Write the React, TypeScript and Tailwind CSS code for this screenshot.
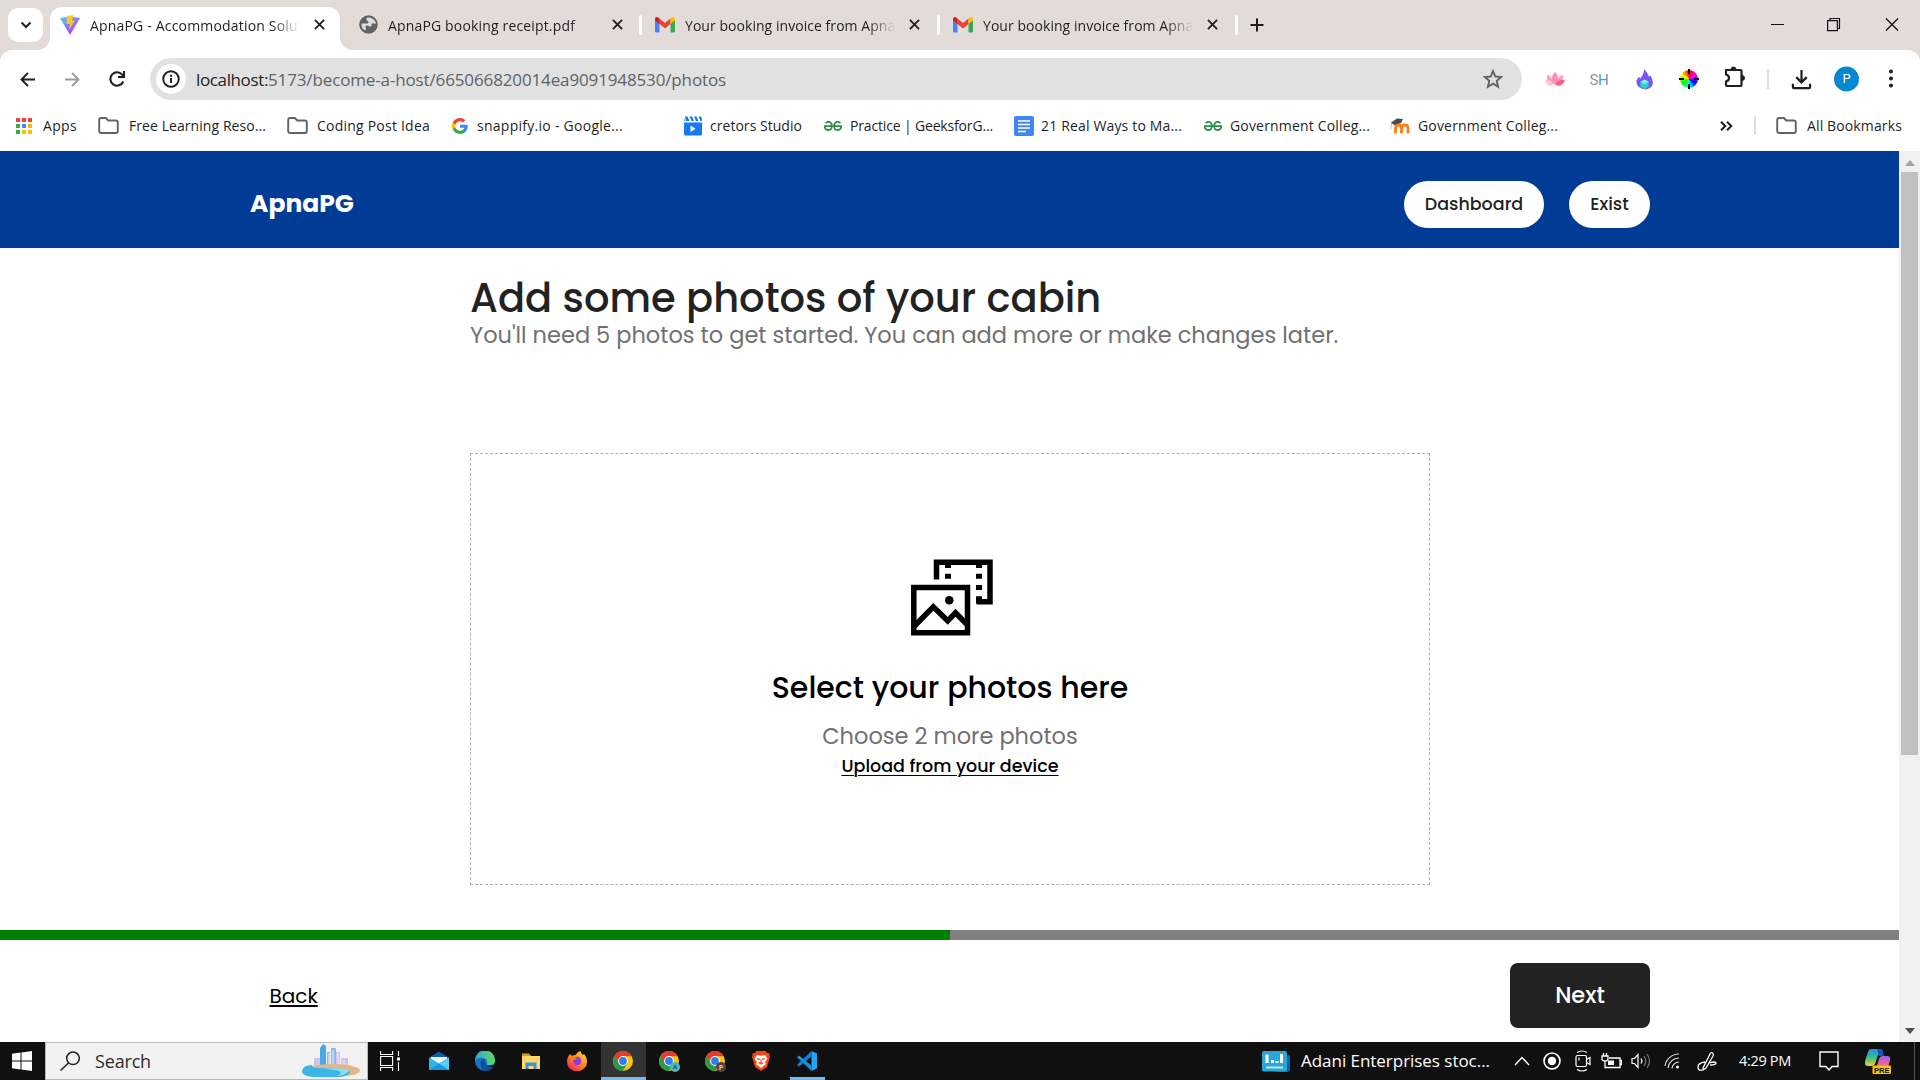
import { useLayoutEffect, useRef, useState } from "react";
import type { ReactNode } from "react";

const ui = "font-['Open_Sans','Noto_Sans',sans-serif]";
const brand = "font-['Poppins','Inter',sans-serif]";

/* One line of text whose tracking is adjusted until it fills the given width. */
function Fit({ w, className = "", children }: { w: number; className?: string; children: string }) {
  const ref = useRef<HTMLSpanElement>(null);
  const [ls, setLs] = useState(0);
  useLayoutEffect(() => {
    if (ref.current) setLs((w - ref.current.getBoundingClientRect().width) / children.length);
  }, [w, children]);
  return (
    <span ref={ref} className={"inline-block shrink-0 whitespace-pre " + className} style={{ letterSpacing: ls }}>
      {children}
    </span>
  );
}

function Gmail() {
  return (
    <svg viewBox="0 0 20 16" className="h-4 w-5 shrink-0">
      <path d="M0 3v11q0 1.500 1.500 1.500H4.500V6z" fill="#4285f4" />
      <path d="M20 3v11q0 1.500-1.500 1.500H15.500V6z" fill="#34a853" />
      <path d="M4.500 7V1.500L10 6l5.500-4.500V7L10 11.500z" fill="#ea4335" />
      <path d="M0 3.500V2.300C0 .2 2-.5 3.500.7l1 .8V7z" fill="#c5221f" />
      <path d="M20 3.500V2.300C20 .2 18-.5 16.500.7l-1 .8V7z" fill="#fbbc04" />
    </svg>
  );
}

function Vite() {
  return (
    <svg viewBox="0 0 20 20" className="size-5 shrink-0">
      <defs>
        <linearGradient id="va" x1="0" y1="0" x2=".6" y2="1">
          <stop offset="0" stopColor="#41d1ff" />
          <stop offset="1" stopColor="#bd34fe" />
        </linearGradient>
      </defs>
      <path d="M0 3l10.500-1.500L20 3 10 20z" fill="url(#va)" />
      <path d="M7 1l6.500-1-1.500 5.500h3L9 15l1-6H6.500z" fill="#ffc61c" />
    </svg>
  );
}

function Globe() {
  return (
    <svg viewBox="0 0 20 20" className="size-[19px] shrink-0">
      <circle cx="10" cy="10" r="9.800" fill="#5f6368" />
      <path d="M9 2.500c-2 2-1 3 .5 4s0 2.500-1.500 2.500H3c-1 3 1 6 3 7 2-.5 1.500-3 .5-4 1-1.500 3-1 4.500 0 2 .5 3-1 2-2.500 1-1.500 3-1 4.800 0C17.500 5 14 2.500 9 2.500z" fill="#e3dbd8" />
      <path d="M10 17.500c3.500-.3 6-2 7-5.500-2.500-.5-3 2-5 2.500-1.500.5-2 2-2 3z" fill="#5f6368" />
    </svg>
  );
}

function Cross({ className = "" }: { className?: string }) {
  return (
    <svg viewBox="0 0 12 12" className={"size-[11px] shrink-0 " + className}>
      <path d="M1 1l10 10M11 1L1 11" stroke="#1f1f1f" strokeWidth="2" />
    </svg>
  );
}

function Tab({ icon, children, w, className = "" }: { icon: ReactNode; children: string; w: number; className?: string }) {
  return (
    <div className={"flex h-[43px] shrink-0 items-center " + className}>
      {icon}
      <div className="ml-[10px] w-[212px] overflow-hidden pt-[2px] text-[14px] leading-5 text-[#1f1f1f] [mask-image:linear-gradient(to_right,#000_86%,transparent_99%)]">
        <Fit w={w}>{children}</Fit>
      </div>
      <Cross className="ml-[12px]" />
    </div>
  );
}

function TabStrip() {
  return (
    <div className="flex h-[50px] bg-[#e3dbd8]">
      <div className="mt-2 ml-2 flex h-[34px] w-[35px] items-center justify-center rounded-[10px] bg-white">
        <svg viewBox="0 0 12 8" className="h-2 w-3">
          <path d="M1.500 1.500L6 6l4.500-4.500" fill="none" stroke="#1f1f1f" strokeWidth="2" />
        </svg>
      </div>
      <div className="relative mt-[7px] ml-[7px] w-[290px] rounded-t-[12px] bg-white pl-[10px]">
        <span className="absolute bottom-0 -left-3 size-3 bg-[radial-gradient(circle_at_0_0,transparent_11.5px,#fff_12px)]" />
        <span className="absolute -right-3 bottom-0 size-3 bg-[radial-gradient(circle_at_100%_0,transparent_11.5px,#fff_12px)]" />
        <Tab icon={<Vite />} w={234} className="-mt-[4px]">ApnaPG - Accommodation Solution</Tab>
      </div>
      <Tab icon={<Globe />} w={187} className="mt-[3px] ml-[19px]">ApnaPG booking receipt.pdf</Tab>
      <span className="mt-[15px] ml-[16px] h-5 w-[3px] rounded bg-white" />
      <Tab icon={<Gmail />} w={229} className="mt-[3px] ml-[13px]">Your booking invoice from ApnaPG</Tab>
      <span className="mt-[15px] ml-[17px] h-5 w-[3px] rounded bg-white" />
      <Tab icon={<Gmail />} w={229} className="mt-[3px] ml-[13px]">Your booking invoice from ApnaPG</Tab>
      <span className="mt-[15px] ml-[17px] h-5 w-[3px] rounded bg-white" />
      <svg viewBox="0 0 14 14" className="mt-[18px] ml-[12px] size-[14px]">
        <path d="M7 .5v13M.5 7h13" stroke="#1f1f1f" strokeWidth="2" />
      </svg>
      <svg viewBox="0 0 130 16" className="mt-4 mr-[20px] ml-auto h-4 w-[130px]" fill="none" stroke="#111" strokeWidth="1.200">
        <path d="M1 8.500h13M57.600 4.600h9.800v10h-9.800zM60 4.500v-2h9.500v10H67.500" />
        <path d="M116 2.500l12 12M128 2.500l-12 12" strokeWidth="1.300" />
      </svg>
    </div>
  );
}

function Toolbar() {
  return (
    <div className="bg-[#e3dbd8]">
      <div className="flex h-[58px] items-center rounded-t-[12px] bg-white">
        <svg viewBox="0 0 16 16" className="ml-[20px] size-[15px]" fill="none" stroke="#1f1f1f" strokeWidth="2.100">
          <path d="M8.500 1L1.700 8l6.800 7M2 8h14" />
        </svg>
        <svg viewBox="0 0 16 16" className="ml-[30px] size-[15px]" fill="none" stroke="#9a9a9a" strokeWidth="2.100">
          <path d="M7.500 1l6.800 7-6.800 7M14 8H0" />
        </svg>
        <svg viewBox="0 0 16 16" className="ml-[29px] size-4" fill="none" stroke="#1f1f1f" strokeWidth="2.100">
          <path d="M14.300 10.500A6.700 6.700 0 1 1 13.500 4L14.500 5.500M15 0v6H9" />
        </svg>
        <div className="ml-[25px] flex h-[42px] w-[1372px] items-center rounded-full bg-[#e1e1e1] pl-[6px]">
          <span className="flex size-[30px] items-center justify-center rounded-full bg-white">
            <svg viewBox="0 0 18 18" className="size-[18px]" fill="none" stroke="#1f1f1f" strokeWidth="1.900">
              <circle cx="9" cy="9" r="7.800" />
              <path d="M9 8v5M9 4.700v2" />
            </svg>
          </span>
          <span className="ml-[10px] flex pt-[1px] text-[17px] leading-6">
            <Fit w={72} className="text-[#1f1f1f]">localhost:</Fit>
            <Fit w={458} className="text-[#5f6368]">5173/become-a-host/665066820014ea9091948530/photos</Fit>
          </span>
          <svg viewBox="0 0 20 20" className="mr-[19px] ml-auto size-5" fill="none" stroke="#5f6368" strokeWidth="1.900">
            <path d="M10 2l2.300 5.500 5.900.5-4.500 3.900 1.400 5.800L10 14.600l-5.100 3.100 1.400-5.800L1.800 8l5.900-.5z" />
          </svg>
        </div>
        <svg viewBox="0 0 20 16" className="ml-[23px] h-4 w-5">
          <path d="M2 4q4 0 6 7L6 14Q1 10 2 4zM18 4q-4 0-6 7l2 3q5-4 4-10z" fill="#ff9db8" />
          <path d="M10 1q5 5 2 12H8Q5 6 10 1z" fill="#ff8faf" />
          <path d="M0 9q6-1 9 5-6 3-9-5z" fill="#ffc2d2" />
          <path d="M20 9q-7-1-10 5 7 3 10-5z" fill="#ff5c8a" />
        </svg>
        <span className="ml-[24px] flex w-[20px] justify-center pt-[2px] font-['Roboto',sans-serif] text-[15px] tracking-[-0.4px]">
          <span className="text-[#8b98a5]">S</span>
          <span className="text-[#5a94cc]">H</span>
        </span>
        <svg viewBox="0 0 18 22" className="ml-[27px] h-[21px] w-[17px]">
          <path d="M8.500 0Q13 5 13.500 8l2-1q4.500 8 .5 12-6 5-13 0-5-5 0-11l1.500 2Q8.500 6 8.500 0z" fill="#7f52f2" />
          <path d="M9 11l4.500 2.500v5L9 21l-4.500-2.500v-5z" fill="#25d0d8" />
          <path d="M9 11l4.500 2.500L9 16l-4.500-2.500z" fill="#7df0d5" />
        </svg>
        <span className="relative ml-[27px] size-[18px] rounded-full bg-[conic-gradient(#f00,#f0f,#00f,#0ff,#0f0,#ff0,#f00)]">
          <span className="absolute -top-[1px] left-[8px] h-[5px] w-[1.500px] bg-black" />
          <span className="absolute -bottom-[1px] left-[8px] h-[5px] w-[1.500px] bg-black" />
          <span className="absolute top-[8px] -left-[1px] h-[1.500px] w-[5px] bg-black" />
          <span className="absolute top-[8px] -right-[1px] h-[1.500px] w-[5px] bg-black" />
        </span>
        <svg viewBox="0 0 22 22" className="ml-[26px] size-[22px] -translate-y-[2px]" fill="none" stroke="#1f1f1f" strokeWidth="2.200">
          <path d="M2 4h14.500q1 0 1 1v14q0 1-1 1H3q-1 0-1-1v-3.500c4-1 4-6 0-7z" strokeLinejoin="round" />
          <path d="M7 3.500a2.500 2.500 0 0 1 5 0zM18 9.500a2.500 2.500 0 0 1 0 5z" fill="#1f1f1f" stroke="#1f1f1f" strokeWidth="1" />
        </svg>
        <span className="ml-[21px] h-5 w-[2px] bg-[#e3dbd8]" />
        <svg viewBox="0 0 22 22" className="ml-[22px] size-[21px]" fill="none" stroke="#1f1f1f" strokeWidth="2.300">
          <path d="M11 1v13M5.500 8.500L11 14l5.500-5.500M2 15.500v3.500q0 1 1 1h16q1 0 1-1v-3.500" />
        </svg>
        <span className="ml-[22px] flex size-[25px] -translate-y-[0.500px] items-center justify-center rounded-full bg-[#0288d1] font-['Roboto',sans-serif] text-[13px] text-white">P</span>
        <svg viewBox="0 0 4 20" className="ml-[30px] h-5 w-1" fill="#1f1f1f">
          <circle cx="2" cy="2.500" r="2" />
          <circle cx="2" cy="9.500" r="2" />
          <circle cx="2" cy="16.500" r="2" />
        </svg>
      </div>
    </div>
  );
}

function FolderOutline() {
  return (
    <svg viewBox="0 0 21 17" className="h-[17px] w-[21px] shrink-0" fill="none" stroke="#5f6368" strokeWidth="1.900">
      <path d="M1.200 14V3q0-2 2-2H8l2.200 2.500h7.600q2 0 2 2V14q0 2-2 2H3.200q-2 0-2-2z" />
    </svg>
  );
}

function Gfg() {
  return (
    <svg viewBox="0 0 18 10" className="h-[10px] w-[18px] shrink-0" fill="none" stroke="#2f8d46" strokeWidth="1.800">
      <path d="M1.500 1.900Q6-.8 7.600 3.200 8.500 9 4.500 9 1 9 .8 5.200h16.400Q17 9 13.500 9 9.500 9 10.400 3.200 12-.8 16.500 1.900" />
    </svg>
  );
}

const rainbow = ["bg-[#ea4335]", "bg-[#ea4335]", "bg-[#ea4335]", "bg-[#34a853]", "bg-[#4285f4]", "bg-[#fbbc04]", "bg-[#34a853]", "bg-[#fbbc04]", "bg-[#fbbc04]"];

function Bookmarks() {
  return (
    <div className="flex h-[43px] items-center bg-white pb-[8px] text-[14px] text-[#1f1f1f]">
      <div className="ml-4 grid grid-cols-3 gap-x-[2px] gap-y-[2px]">
        {rainbow.map((c, i) => (
          <span key={i} className={"size-[4px] " + c} />
        ))}
      </div>
      <Fit w={34} className="ml-[11px]">Apps</Fit>
      <span className="ml-[21px] flex"><FolderOutline /></span>
      <Fit w={137} className="ml-[10px]">Free Learning Reso...</Fit>
      <span className="ml-[21px] flex"><FolderOutline /></span>
      <Fit w={113} className="ml-[9px]">Coding Post Idea</Fit>
      <svg viewBox="0 0 24 24" className="ml-[22px] size-4 shrink-0">
        <path fill="#4285f4" d="M23.500 12.300c0-.8-.1-1.600-.2-2.300H12v4.500h6.500c-.3 1.500-1.100 2.700-2.400 3.600v3h3.900c2.200-2.100 3.500-5.100 3.500-8.800z" />
        <path fill="#34a853" d="M12 24c3.200 0 6-1.100 8-2.900l-3.900-3c-1.100.7-2.500 1.200-4.100 1.200-3.100 0-5.800-2.100-6.700-5H1.200v3.100C3.200 21.300 7.300 24 12 24z" />
        <path fill="#fbbc04" d="M5.300 14.300a7 7 0 0 1 0-4.600V6.600H1.200a12 12 0 0 0 0 10.800z" />
        <path fill="#ea4335" d="M12 4.800c1.800 0 3.300.6 4.600 1.800L20 3.200C18 1.200 15.200 0 12 0 7.300 0 3.200 2.700 1.200 6.600l4.100 3.100c.9-2.900 3.600-4.900 6.700-4.900z" />
      </svg>
      <Fit w={146} className="ml-[9px]">snappify.io - Google...</Fit>
      <svg viewBox="0 0 18 20" className="ml-[61px] h-5 w-[18px] shrink-0">
        <path d="M0 6.500h18V18q0 1.500-1.500 1.500h-15Q0 19.500 0 18z" fill="#1877f2" />
        <path d="M1 .5h2.500l2 4.500H2zM5.500.5H8L10 5H7.500zM10 .5h2.500l2 4.500H12zM14.500.5H17q1 1 1 4.500h-1.500zM0 2l1 3H0z" fill="#1877f2" />
        <path d="M6.500 9.500v6.500l5-3.200z" fill="#fff" />
      </svg>
      <Fit w={92} className="ml-[8px]">cretors Studio</Fit>
      <span className="ml-[22px] flex"><Gfg /></span>
      <Fit w={143} className="ml-[8px]">Practice | GeeksforG...</Fit>
      <svg viewBox="0 0 20 20" className="ml-[21px] size-5 shrink-0">
        <rect width="20" height="20" rx="2" fill="#4285f4" />
        <path d="M4 5h12M4 8.500h12M4 12h12M4 15.500h8" stroke="#fff" strokeWidth="1.600" />
      </svg>
      <Fit w={141} className="ml-[7px]">21 Real Ways to Ma...</Fit>
      <span className="ml-[22px] flex"><Gfg /></span>
      <Fit w={140} className="ml-[8px]">Government Colleg...</Fit>
      <svg viewBox="0 0 20 16" className="ml-[20px] h-4 w-5 shrink-0">
        <path d="M5.500 15.500V10q0-3 3-3t3 3v5.500M11.500 10q0-3 3.200-3T18 10v5.500" fill="none" stroke="#f98012" strokeWidth="2.800" />
        <path d="M1 4.500L7 .5l6 .5-2 4-7 2z" fill="#4a4a4a" />
        <path d="M1.500 5L1 11" stroke="#c9b8a8" />
      </svg>
      <Fit w={140} className="ml-[8px]">Government Colleg...</Fit>
      <svg viewBox="0 0 13 10" className="mr-[21px] ml-auto h-[10px] w-[13px]" fill="none" stroke="#1f1f1f" strokeWidth="2">
        <path d="M1 .7L5.300 5 1 9.300M7 .7L11.300 5 7 9.300" />
      </svg>
      <span className="h-[19px] w-[2px] bg-[#e3dbd8]" />
      <span className="ml-[20px] flex"><FolderOutline /></span>
      <Fit w={95} className="mr-[18px] ml-[10px]">All Bookmarks</Fit>
    </div>
  );
}

function PhotosIcon() {
  return (
    <svg viewBox="0 0 82 77" className="ml-[3px] h-[77px] w-[82px]" fill="none" stroke="#000">
      <path d="M25.500 20.500V3.200h53.500v39.500H65.500" strokeWidth="5.500" />
      <path d="M2.800 28.600h53.700v45.200H2.800z" strokeWidth="5.500" />
      <path d="M3 67.500L22.300 47.800 36.700 61.800 44.500 53.800 57 66.500" strokeWidth="5.500" />
      <circle cx="38.300" cy="41.300" r="4.300" fill="#000" stroke="none" />
      <path d="M34 4h6v5h-6zM34 14.800h6v5h-6zM65 4h6v5h-6zM65 14.800h6v5h-6zM65 26h6v5h-6zM65 37.300h6v7h-6z" fill="#000" stroke="none" />
    </svg>
  );
}

function Page() {
  return (
    <div className={"flex w-[1899px] flex-col bg-white whitespace-nowrap " + brand}>
      <header className="flex h-[97px] items-start justify-between bg-[#003b95] pt-[30px] pr-[249px] pl-[250px]">
        <span className="text-[25px] leading-[46px] font-bold text-white">ApnaPG</span>
        <nav className="flex gap-[25px] text-[17.5px] leading-[46px] font-medium text-[#222]">
          <span className="h-[47px] w-[140px] rounded-full bg-white text-center">Dashboard</span>
          <span className="h-[47px] w-[81px] rounded-full bg-white text-center">Exist</span>
        </nav>
      </header>
      <main className="flex h-[682px] flex-col px-[470px]">
        <h1 className="mt-[24px] h-12 text-[40px] leading-[52px] font-medium text-[#222]">Add some photos of your cabin</h1>
        <p className="h-[30px] text-[22.500px] leading-[30px] text-[#717171]">You'll need 5 photos to get started. You can add more or make changes later.</p>
        <div className="mt-[103px] flex h-[432px] w-[960px] flex-col items-center border border-dashed border-[#b0b0b0] pt-[105px]">
          <PhotosIcon />
          <p className="mt-[30px] text-[30px] leading-[44px] font-medium text-black">Select your photos here</p>
          <p className="mt-[8px] text-[22.500px] leading-[36px] text-[#717171]">Choose 2 more photos</p>
          <p className="mt-[-2px] text-[17.5px] leading-[28px] font-medium text-black underline decoration-1 underline-offset-[3px]">Upload from your device</p>
        </div>
      </main>
      <div className="flex h-[10px] bg-[#808080]">
        <div className="w-1/2 bg-[#008000]" />
      </div>
      <footer className="flex h-[102px] items-start justify-between pr-[249px] pl-[269.5px]">
        <span className="mt-[42px] text-[20px] leading-[28px] text-black underline decoration-2 underline-offset-[1.500px]">Back</span>
        <div className="mt-[23px] h-[65px] w-[140px] rounded-[8px] bg-[#222] text-center text-[22.500px] leading-[65px] font-medium text-white">Next</div>
      </footer>
    </div>
  );
}

function Chrome() {
  return (
    <svg viewBox="0 0 20 20" className="size-5 shrink-0">
      <circle cx="10" cy="10" r="10" fill="#fbc116" />
      <path d="M10 10l-3.900 2.500L1.340 5A10 10 0 0 0 10 20l4.300-7.500z" fill="#2a9c46" />
      <path d="M1.340 5L5.900 12.500 10 5.200h8.700A10 10 0 0 0 1.340 5z" fill="#e33b2e" />
      <circle cx="10" cy="10" r="4.900" fill="#fff" />
      <circle cx="10" cy="10" r="3.900" fill="#2d7ff0" />
    </svg>
  );
}

function Taskbar() {
  return (
    <div className="flex h-[38px] items-center bg-[#101010] text-white">
      <svg viewBox="0 0 20 20" className="ml-3 size-5 shrink-0" fill="#fff">
        <path d="M0 2.700L8.500 1.500v8H0zM9.500 1.400L20 0v9.500H9.500zM0 10.500h8.500v8L0 17.300zM9.500 10.500H20V20L9.500 18.600z" />
      </svg>
      <div className="ml-[13px] flex h-[38px] w-[323px] shrink-0 items-center border border-[#b9b9b9] bg-[#f2f2f2]">
        <svg viewBox="0 0 20 20" className="ml-[14px] size-5" fill="none" stroke="#222" strokeWidth="1.500">
          <circle cx="13" cy="7.300" r="6.300" />
          <path d="M8.500 12L.5 19.500" />
        </svg>
        <Fit w={56} className="ml-[15px] text-[18px] text-[#2b2b2b]">Search</Fit>
        <svg viewBox="0 0 58 34" className="mr-[7px] ml-auto h-[34px] w-[58px]">
          <path d="M12 14h6v10h-6zM39 14h7v10h-7zM33 8h5v16h-5z" fill="#cfc5e6" />
          <path d="M25 8h3v16h-3zM29 4h5v20h-5z" fill="#94b8e6" />
          <path d="M18 4l3-4 3 2v22h-6z" fill="#48a8e8" />
          <path d="M31 6v18M36 9v15M42 16v8M27 9v15" stroke="#e8f0fa" />
          <ellipse cx="31" cy="26.500" rx="27" ry="6.500" fill="#e4b58a" />
          <path d="M0 27q1-6 10-6 0 3 8 3 20 0 30 2 2 5-10 7H16Q0 33 0 27z" fill="#39b5e6" />
          <path d="M20 25q18-2 28 1-4 5-14 6.500 8-4 3-5.500-5-1.500-17-2z" fill="#8be0f0" />
        </svg>
      </div>
      <svg viewBox="0 0 20 20" className="ml-3 size-5 shrink-0" fill="none" stroke="#fff" strokeWidth="1.100">
        <path d="M.6 0v3.500h12V0M.6 5.500h12v9H.6zM.6 20v-3.500h12V20M18.500 0v5M18.500 11v9" />
        <path d="M17 6.500h3v3h-3z" fill="#fff" stroke="none" />
      </svg>
      <svg viewBox="0 0 20 20" className="ml-[29px] size-5 shrink-0">
        <path d="M0 6.500L10 .5l10 6v4H0z" fill="#0b5cad" />
        <path d="M2 6h16v7H2z" fill="#eef3f8" />
        <path d="M0 6.500l10 6 10-6V19H0z" fill="#2db3ea" />
        <path d="M0 19l10-6.500L20 6.500V19z" fill="#55ccf5" />
        <path d="M0 19L10 12.500 20 19z" fill="#1d96d8" />
      </svg>
      <svg viewBox="0 0 20 20" className="ml-[26px] size-5 shrink-0">
        <defs>
          <linearGradient id="ed" x1="0" y1="0" x2="1" y2="0">
            <stop offset="0" stopColor="#2fa8dc" />
            <stop offset="1" stopColor="#5fd860" />
          </linearGradient>
        </defs>
        <circle cx="10" cy="10" r="10" fill="#1274c4" />
        <path d="M0 9A10 10 0 0 1 20 9.500c0 3-2.500 4.800-5.500 4.800-3.500 0-2-2-2.500-4C11 6.500 3 5 0 10z" fill="url(#ed)" />
        <path d="M5.500 13c0-3.500 2.500-5.500 5-5-1.500 2-1.500 8 7.500 7.500-2 3.500-5 4.500-8 4-3-.5-4.500-3-4.500-6.500z" fill="#0d4f9e" />
        <path d="M12.200 14Q15 15.700 19 13.500q-.5 1.500-1.500 2.500-4 .5-5.300-2z" fill="#101010" />
      </svg>
      <svg viewBox="0 0 18 18" className="ml-[27px] size-[18px] shrink-0">
        <path d="M0 1.500h7l2 2.500H0z" fill="#e0a010" />
        <path d="M0 4h18v13H0z" fill="#ffd766" />
        <path d="M3.500 17v-6.500h11V17h-3v-3h-5v3z" fill="#3a94d8" />
      </svg>
      <svg viewBox="0 0 20 20" className="ml-[27px] size-5 shrink-0">
        <defs>
          <linearGradient id="ff" x1="1" y1="0" x2=".2" y2="1">
            <stop offset="0" stopColor="#ffe14a" />
            <stop offset=".5" stopColor="#ff8a1e" />
            <stop offset="1" stopColor="#f0246b" />
          </linearGradient>
        </defs>
        <path d="M3 3l2 2q1.500-1 3.500-1Q10 1 13.500 0q0 2.500 2.500 4l1-1q3 3 3 8a10 9.300 0 0 1-20 0Q0 6 3 3z" fill="url(#ff)" />
        <circle cx="10" cy="10" r="4.300" fill="#8a3fd8" />
        <path d="M3 6q4-1.500 7 2-3 0-4 1.500T8 13Q4 12 3 6z" fill="#ff7a1a" />
      </svg>
      <div className="ml-[14px] flex h-full w-[45px] shrink-0 items-center justify-center border-b-[3px] border-[#76b9ed] bg-[#333] pt-[3px] pr-[2px]">
        <Chrome />
      </div>
      <span className="relative ml-[13px] flex">
        <Chrome />
        <span className="absolute -right-px -bottom-px flex size-[10px] items-center justify-center rounded-full bg-[#55b3bd] text-[6px] leading-none font-bold text-[#174a55]">A</span>
      </span>
      <span className="relative ml-[26px] flex">
        <Chrome />
        <span className="absolute -right-px -bottom-px flex size-[10px] items-center justify-center rounded-full bg-[#5d4037] text-[7px] leading-none font-bold text-[#d9c8c0]">P</span>
      </span>
      <svg viewBox="0 0 18 20" className="ml-[27px] h-5 w-[18px] shrink-0">
        <path d="M4.500 0h9l1.500 2h2l1 4-1 3-2 7-6 4-6-4-2-7-1-3 1-4h2z" fill="#fb4518" />
        <path d="M5 4l4 .7L13 4l2.500 3.500L13 11l1 2-5 4-5-4 1-2-2.500-3.500z" fill="#fff" />
        <path d="M5 7.500l3 .8M13 7.500l-3 .8M9 8.500v4M6.500 11.500L9 13l2.500-1.500" stroke="#fb4518" strokeWidth="1.200" fill="none" />
      </svg>
      <div className="ml-5 flex h-full w-[35px] shrink-0 items-center justify-center border-b-[3px] border-[#76b9ed] pt-[3px] pr-[2px]">
        <svg viewBox="0 0 20 20" className="size-5">
          <path d="M14.500 0L20 2.500v15L14.500 20z" fill="#24a4f2" />
          <path d="M14.500 0v5.500L2 15.500 0 13.800z" fill="#1580cc" />
          <path d="M14.500 20v-5.500L2 4.500 0 6.200z" fill="#1b8edc" />
        </svg>
      </div>
      <svg viewBox="0 0 28 21" className="mr-[11px] ml-auto h-[21px] w-7 shrink-0">
        <path d="M22 4h4q2 0 2 2v12q0 3-3 3H14z" fill="#0b66b0" />
        <rect width="25" height="20.500" rx="2" fill="#2aa6d8" />
        <path d="M5 3.500v8.500M10.500 9V12M15 10v2M19.500 3v9" stroke="#fff" strokeWidth="3" />
        <path d="M4 16.500h17" stroke="#b5ecf7" strokeWidth="2" />
      </svg>
      <Fit w={189} className="text-[17px]">Adani Enterprises stoc...</Fit>
      <svg viewBox="0 0 16 10" className="ml-[24px] h-[10px] w-4 shrink-0" fill="none" stroke="#fff" strokeWidth="1.400">
        <path d="M1 9l7-7.500L15 9" />
      </svg>
      <svg viewBox="0 0 18 18" className="ml-[13px] size-[18px] shrink-0">
        <circle cx="9" cy="9" r="8" fill="none" stroke="#fff" strokeWidth="1.600" />
        <circle cx="9" cy="9" r="4.200" fill="#fff" />
      </svg>
      <svg viewBox="0 0 16 22" className="ml-[14px] h-[22px] w-4 shrink-0" fill="none" stroke="#fff" strokeWidth="1.200">
        <path d="M2 2.500q5-3 10 0M2 19.500q5 3 10 0" />
        <rect x="1" y="5.500" width="10.500" height="11" rx="1.500" />
        <path d="M11.500 9.500L15 7.500v7l-3.500-2" />
        <path d="M4 7.500v3" />
      </svg>
      <svg viewBox="0 0 21 16" className="ml-[10px] h-4 w-[21px] shrink-0" fill="none" stroke="#fff" strokeWidth="1.300">
        <path d="M8 5h11v9.500H4V9M19 7.500h1.500v4H19M2.500 0v3M5.500 0v3M1 3h6v3q0 2-3 2T1 6zM4 8v6" />
        <path d="M7 7.500h6V12H7z" fill="#fff" stroke="none" />
      </svg>
      <svg viewBox="0 0 20 18" className="ml-[9px] h-[18px] w-5 shrink-0" fill="none" stroke="#fff" strokeWidth="1.200">
        <path d="M1 6.500v5h2.500L7 15.500v-13L3.500 6.500zM10 6.500q1.800 2.500 0 5" />
        <path d="M13 4q3.500 5 0 10M16 2q5 7 0 14" stroke="#777" />
      </svg>
      <svg viewBox="0 0 16 16" className="ml-[13px] size-4 shrink-0" fill="none" stroke="#ddd" strokeWidth="1.200">
        <path d="M1 13A14 14 0 0 1 15 1M4 15A11 11 0 0 1 15 5M8 15.500A7 7 0 0 1 15 9" />
        <circle cx="13.500" cy="14" r="1.500" fill="#fff" stroke="none" />
      </svg>
      <svg viewBox="0 0 20 19" className="ml-[17px] h-[19px] w-5 shrink-0" fill="none" stroke="#fff" strokeWidth="1.300">
        <path d="M6 16L13 2q1-2 2.500-1t.5 3L9 16l-3 2zM8 10Q1 11 1 15t4 3M12 11q7-2 7 0t-6 2" />
      </svg>
      <Fit w={52} className="ml-[22px] text-[14.5px]">4:29 PM</Fit>
      <svg viewBox="0 0 20 20" className="ml-[28px] size-5 shrink-0" fill="none" stroke="#fff" strokeWidth="1.400">
        <path d="M1 1h18v14.500h-6L10 19l-3-3.500H1z" />
      </svg>
      <svg viewBox="0 0 26 25" className="ml-[26px] h-[25px] w-[26px] shrink-0">
        <defs>
          <linearGradient id="c1" x1="0" y1="0" x2="0" y2="1">
            <stop offset="0" stopColor="#1e90f0" />
            <stop offset=".5" stopColor="#35c08a" />
            <stop offset="1" stopColor="#f5d020" />
          </linearGradient>
          <linearGradient id="c2" x1="0" y1="0" x2="0" y2="1">
            <stop offset="0" stopColor="#a45cf0" />
            <stop offset="1" stopColor="#ff6f61" />
          </linearGradient>
        </defs>
        <path d="M6 0h9q3 0 3 4l-5 2-3 9q-1 2-3 2H3q-4 0-3-5L3 3q1-3 3-3z" fill="url(#c1)" />
        <path d="M12 0h3q2 0 3 3l1 4h-5z" fill="#1450c8" />
        <path d="M18 7h4q4 0 3 4l-2 8H11l3-9q1-3 4-3z" fill="url(#c2)" />
        <rect x="7.500" y="16.500" width="18.500" height="8.500" rx="1" fill="#ffc400" />
        <text x="16.700" y="23.600" textAnchor="middle" fontFamily="Liberation Sans" fontSize="7.500" fontWeight="700" fill="#111">PRE</text>
      </svg>
      <span className="mr-[5px] ml-[23px] h-full w-px bg-[#555]" />
    </div>
  );
}

export default function App() {
  return (
    <div className={"flex h-[1080px] w-[1920px] flex-col overflow-hidden bg-white " + ui}>
      <TabStrip />
      <Toolbar />
      <Bookmarks />
      <div className="flex h-[891px] shrink-0">
        <Page />
        <div className="flex w-[21px] flex-col items-center bg-[#f1f1f1]">
          <svg viewBox="0 0 10 6" className="mt-[9px] h-[6px] w-[10px]" fill="#a3a3a3">
            <path d="M0 6l5-6 5 6z" />
          </svg>
          <div className="mt-[6px] h-[583px] w-[17px] bg-[#c1c1c1]" />
          <svg viewBox="0 0 10 6" className="mt-auto mb-[8px] h-[6px] w-[10px]" fill="#505050">
            <path d="M0 0l5 6 5-6z" />
          </svg>
        </div>
      </div>
      <Taskbar />
    </div>
  );
}
